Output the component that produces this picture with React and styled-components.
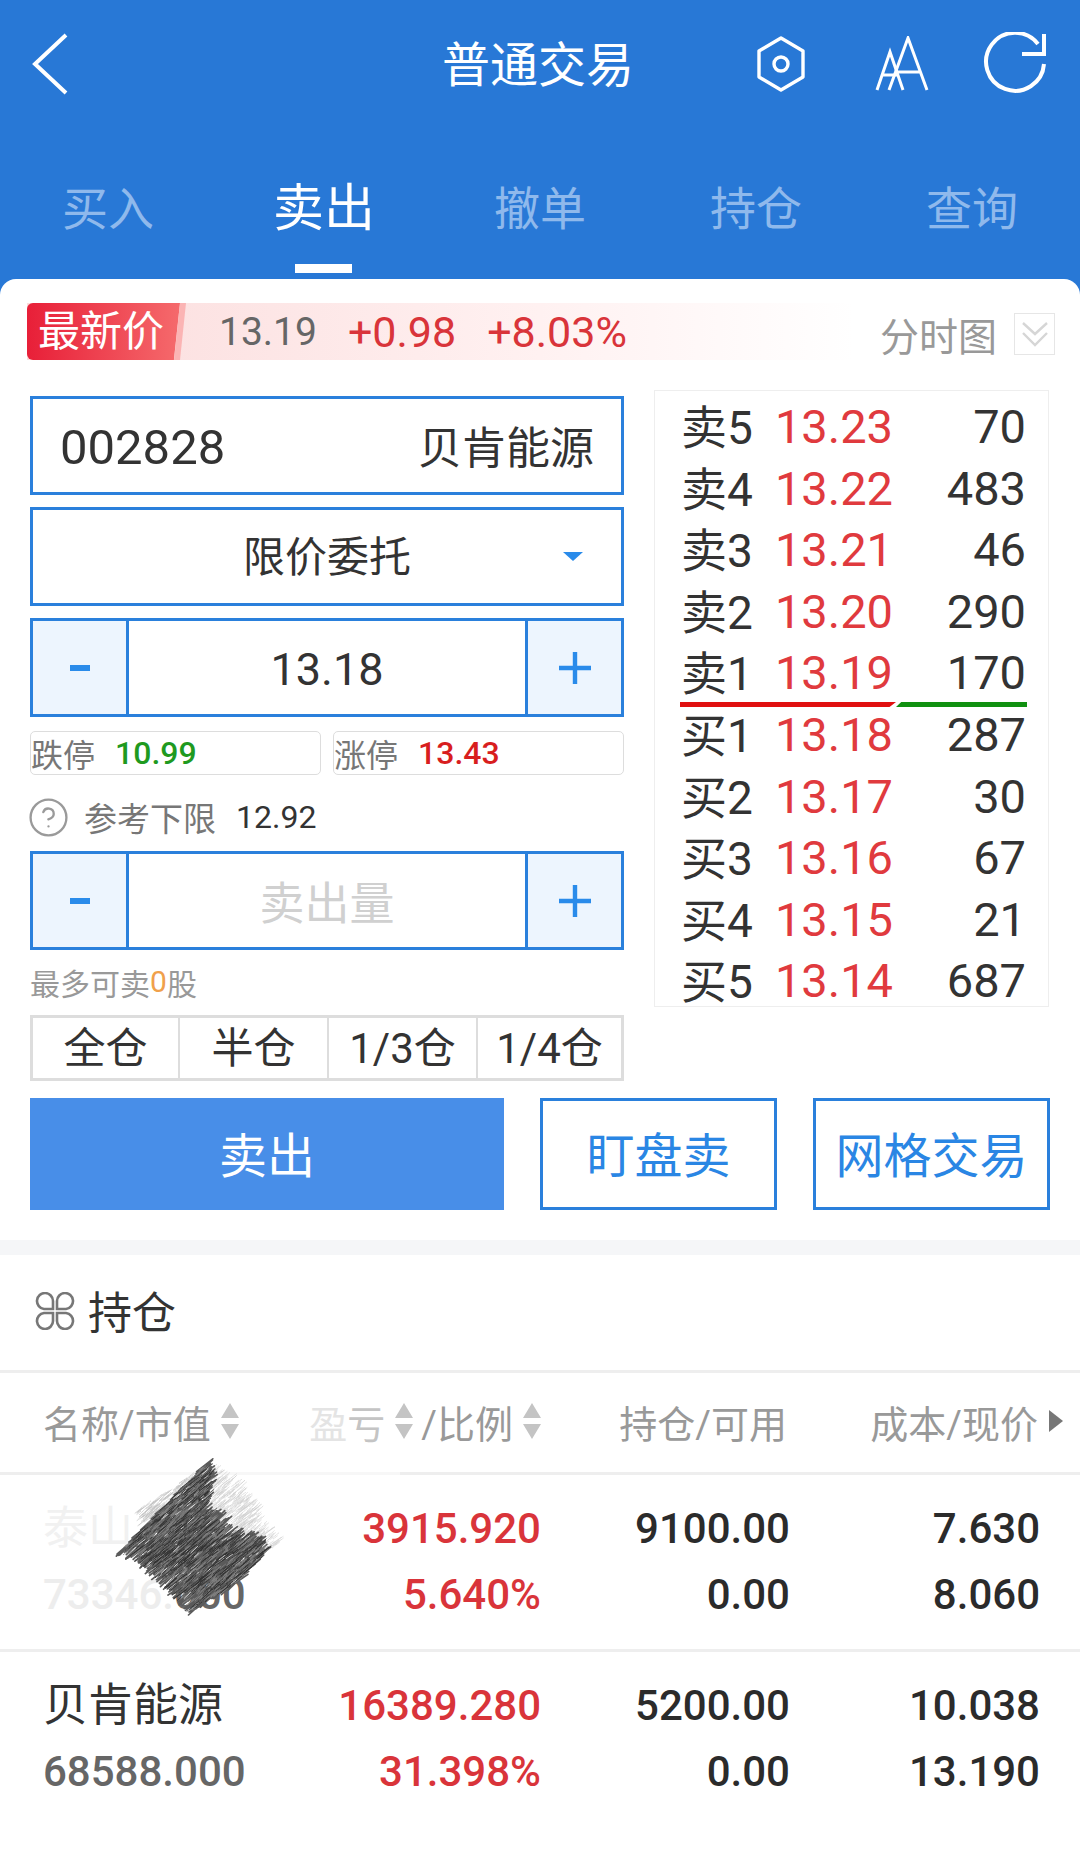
import React from 'react'
import styled, { createGlobalStyle } from 'styled-components'
import { CircleHelp } from 'lucide-react'

const BLUE = '#2878d6'
const LINE = '#2a80dc'
const RED = '#d9343a'

const GlobalStyle = createGlobalStyle`
  html, body { margin: 0; padding: 0; background: #fff; }
  * { box-sizing: border-box; }
  body { font-family: Roboto, "Noto Sans CJK SC", sans-serif; }
`

const tabs = ['买入', '卖出', '撤单', '持仓', '查询']

const asks = [
  ['卖5', '13.23', '70'],
  ['卖4', '13.22', '483'],
  ['卖3', '13.21', '46'],
  ['卖2', '13.20', '290'],
  ['卖1', '13.19', '170'],
]
const bids = [
  ['买1', '13.18', '287'],
  ['买2', '13.17', '30'],
  ['买3', '13.16', '67'],
  ['买4', '13.15', '21'],
  ['买5', '13.14', '687'],
]

const quick = ['全仓', '半仓', '1/3仓', '1/4仓']

const DARK_AREA = [[0, 280], [255, 5], [270, 70], [250, 140], [290, 185], [345, 235], [400, 235], [440, 280], [345, 385], [215, 470], [155, 405], [95, 345], [45, 300]]
const LIGHT_AREA = [[265, 10], [365, 75], [475, 260], [425, 285], [345, 225], [285, 170], [260, 140]]
const LIGHT_LEFT = [[45, 155], [205, 45], [240, 60], [60, 200]]

function inside(pt, poly) {
  let hit = false
  for (let i = 0, j = poly.length - 1; i < poly.length; j = i++) {
    const [xi, yi] = poly[i]
    const [xj, yj] = poly[j]
    if (yi > pt[1] !== yj > pt[1] && pt[0] < ((xj - xi) * (pt[1] - yi)) / (yj - yi) + xi) hit = !hit
  }
  return hit
}

// seeded so the scribble comes out the same on every load
function makeStrokes(poly, count, seed, minLen, maxLen) {
  let s = seed
  const rnd = () => {
    s = (s * 16807) % 2147483647
    return s / 2147483647
  }
  let d = ''
  let made = 0
  while (made < count) {
    const x = rnd() * 480
    const y = rnd() * 480
    const len = minLen + rnd() * maxLen
    const tilt = 0.7 + rnd() * 0.35
    if (!inside([x, y], poly)) continue
    d += `M${(x - len / 2).toFixed(1)} ${(y + (len * tilt) / 2).toFixed(1)}l${len.toFixed(1)} ${(-len * tilt).toFixed(1)}`
    made++
  }
  return d
}

function Scribble() {
  return (
    <ScribbleSvg viewBox="0 0 480 480" preserveAspectRatio="none">
      <g fill="none" strokeLinecap="round">
        <path d={makeStrokes(LIGHT_AREA, 420, 77, 8, 24)} stroke="#cfcfcf" strokeWidth="2" strokeDasharray="3 3" />
        <path d={makeStrokes(LIGHT_LEFT, 160, 91, 8, 22)} stroke="#c0c0c0" strokeWidth="2" strokeDasharray="3 3" />
        <path d={makeStrokes(DARK_AREA, 1400, 11, 14, 36)} stroke="#5a5a5a" strokeWidth="5" />
        <path d={makeStrokes(DARK_AREA, 1100, 29, 6, 18)} stroke="#858585" strokeWidth="2.6" strokeDasharray="3 3" />
        <path d={makeStrokes(DARK_AREA, 520, 53, 10, 30)} stroke="#2e2e2e" strokeWidth="2.6" strokeDasharray="5 3" />
        <path d={makeStrokes(DARK_AREA, 40, 137, 6, 16)} stroke="#fff" strokeWidth="2.2" />
      </g>
    </ScribbleSvg>
  )
}

function BackIcon() {
  return (
    <svg width="36" height="62" viewBox="0 0 36 62">
      <path d="M34 2 L3 31 L34 60" fill="none" stroke="#fff" strokeWidth="4" />
    </svg>
  )
}

function HexIcon() {
  return (
    <svg width="48" height="56" viewBox="0 0 48 56">
      <path d="M24 2 L46 15 V41 L24 54 L2 41 V15 Z" fill="none" stroke="#fff" strokeWidth="3.4" strokeLinejoin="round" />
      <circle cx="24" cy="28" r="7" fill="none" stroke="#fff" strokeWidth="3.4" />
    </svg>
  )
}

function FontSizeIcon() {
  return (
    <svg width="54" height="56" viewBox="0 0 54 56">
      <path d="M2 54 L15 16 L28 54 M7 39 H24" fill="none" stroke="#fff" strokeWidth="3" />
      <path d="M14 54 L33 2 L52 54 M21 36 H45" fill="none" stroke="#fff" strokeWidth="3" />
    </svg>
  )
}

function RefreshIcon() {
  return (
    <svg width="64" height="64" viewBox="0 0 64 64">
      <path d="M55 12 A29 29 0 1 0 61 32" fill="none" stroke="#fff" strokeWidth="4" />
      <path d="M61 2 V22 H39" fill="none" stroke="#fff" strokeWidth="4" />
    </svg>
  )
}

function CollapseIcon() {
  return (
    <CollapseBox>
      <svg width="30" height="28" viewBox="0 0 30 28">
        <path d="M3 3 L15 14 L27 3 M3 13 L15 25 L27 13" fill="none" stroke="#d6d6d6" strokeWidth="2.4" />
      </svg>
    </CollapseBox>
  )
}

function CaretDown() {
  return (
    <svg width="20" height="9" viewBox="0 0 20 9">
      <path d="M0 0 H20 L10 9 Z" fill="#2a8bea" />
    </svg>
  )
}

function MinusIcon() {
  return (
    <svg width="20" height="6" viewBox="0 0 20 6">
      <rect width="20" height="6" fill="#2a8bea" />
    </svg>
  )
}

function PlusIcon() {
  return (
    <svg width="32" height="32" viewBox="0 0 32 32">
      <path d="M0 16 H32 M16 0 V32" stroke="#2a8bea" strokeWidth="4.4" />
    </svg>
  )
}

function CloverIcon() {
  return (
    <svg width="40" height="38" viewBox="0 0 40 38">
      <path
        d="M18 17 H9 A8 8 0 1 1 18 9 Z M22 17 V9 A8 8 0 1 1 31 17 Z M18 21 V29 A8 8 0 1 1 9 21 Z M22 21 H31 A8 8 0 1 1 22 29 Z"
        fill="none"
        stroke="#777"
        strokeWidth="2.6"
      />
    </svg>
  )
}

function SortIcon() {
  return (
    <SortWrap>
      <svg width="18" height="36" viewBox="0 0 18 36">
        <path d="M9 0 L18 15 H0 Z" fill="#c4c4c4" />
        <path d="M0 21 H18 L9 36 Z" fill="#c4c4c4" />
      </svg>
    </SortWrap>
  )
}

function Stepper({ children, placeholder }) {
  return (
    <StepperBox>
      <StepButton><MinusIcon /></StepButton>
      <StepValue $placeholder={placeholder}>{children}</StepValue>
      <StepButton $right><PlusIcon /></StepButton>
    </StepperBox>
  )
}

function DepthLine({ row }) {
  return (
    <DepthRow>
      <DepthLabel>{row[0]}</DepthLabel>
      <DepthPrice>{row[1]}</DepthPrice>
      <DepthQty>{row[2]}</DepthQty>
    </DepthRow>
  )
}

export default function App() {
  return (
    <Page>
      <GlobalStyle />
      <TopBar>
        <BackSlot><BackIcon /></BackSlot>
        <Title>普通交易</Title>
        <TopIcons>
          <HexIcon />
          <FontSizeIcon />
          <RefreshIcon />
        </TopIcons>
      </TopBar>
      <TabBar>
        {tabs.map((t) => (
          <Tab key={t} $active={t === '卖出'}>{t}</Tab>
        ))}
      </TabBar>

      <Card>
        <PriceBar>
          <PriceStrip>
            <PriceTag>最新价</PriceTag>
            <TagEdge />
            <LastPrice>13.19</LastPrice>
            <Change>+0.98</Change>
            <Change>+8.03%</Change>
          </PriceStrip>
          <ChartLink>分时图</ChartLink>
          <CollapseIcon />
        </PriceBar>

        <TradeGrid>
          <LeftColumn>
            <FieldBox $between>
              <Code>002828</Code>
              <StockName>贝肯能源</StockName>
            </FieldBox>
            <FieldBox>
              <OrderType>限价委托</OrderType>
              <CaretSlot><CaretDown /></CaretSlot>
            </FieldBox>
            <Stepper>13.18</Stepper>
            <LimitRow>
              <LimitChip>跌停<LimitValue $color="#1f9a1f">10.99</LimitValue></LimitChip>
              <LimitChip>涨停<LimitValue $color="#d81e1e">13.43</LimitValue></LimitChip>
            </LimitRow>
            <HintRow>
              <CircleHelp size={43} strokeWidth={1.3} color="#9a9a9a" />
              <HintLabel>参考下限</HintLabel>
              <HintValue>12.92</HintValue>
            </HintRow>
            <Stepper placeholder>卖出量</Stepper>
            <MaxRow>最多可卖<MaxCount>0</MaxCount>股</MaxRow>
            <QuickRow>
              {quick.map((q) => (
                <QuickButton key={q}>{q}</QuickButton>
              ))}
            </QuickRow>
          </LeftColumn>

          <DepthPanel>
            {asks.map((r) => <DepthLine key={r[0]} row={r} />)}
            <DepthDivider>
              <RedBar />
              <GreenBar />
            </DepthDivider>
            {bids.map((r) => <DepthLine key={r[0]} row={r} />)}
          </DepthPanel>
        </TradeGrid>

        <Actions>
          <SellButton>卖出</SellButton>
          <OutlineButton>盯盘卖</OutlineButton>
          <OutlineButton>网格交易</OutlineButton>
        </Actions>

        <Band />

        <SectionTitle>
          <CloverIcon />
          <SectionName>持仓</SectionName>
        </SectionTitle>

        <TableHead>
          <HeadCell $left>名称/市值<SortIcon /></HeadCell>
          <HeadCell>
            <FadedChar $color="#e4e4e4">盈</FadedChar>
            <FadedChar $color="#c4c4c4">亏</FadedChar>
            <SortIcon />/比例<SortIcon />
          </HeadCell>
          <HeadCell>持仓/可用</HeadCell>
          <HeadCell $overhang>成本/现价<MoreArrow /></HeadCell>
        </TableHead>

        <HoldingRow>
          <Cell $left>
            <NameLine $faded>泰山</NameLine>
            <ValueLine $muted><FadedChar $color="#ededed">73346.</FadedChar>000</ValueLine>
          </Cell>
          <Cell>
            <ValueLine $red>3915.920</ValueLine>
            <ValueLine $red>5.640%</ValueLine>
          </Cell>
          <Cell>
            <ValueLine>9100.00</ValueLine>
            <ValueLine>0.00</ValueLine>
          </Cell>
          <Cell>
            <ValueLine>7.630</ValueLine>
            <ValueLine>8.060</ValueLine>
          </Cell>
          <Scribble />
        </HoldingRow>

        <HoldingRow $last>
          <Cell $left>
            <NameLine>贝肯能源</NameLine>
            <ValueLine $muted>68588.000</ValueLine>
          </Cell>
          <Cell>
            <ValueLine $red>16389.280</ValueLine>
            <ValueLine $red>31.398%</ValueLine>
          </Cell>
          <Cell>
            <ValueLine>5200.00</ValueLine>
            <ValueLine>0.00</ValueLine>
          </Cell>
          <Cell>
            <ValueLine>10.038</ValueLine>
            <ValueLine>13.190</ValueLine>
          </Cell>
        </HoldingRow>
      </Card>
    </Page>
  )
}

const Page = styled.div`
  width: 1080px;
  height: 1868px;
  overflow: hidden;
  background: ${BLUE};
  display: flex;
  flex-direction: column;
`

const TopBar = styled.div`
  height: 128px;
  display: grid;
  grid-template-columns: 1fr auto 1fr;
  align-items: center;
`

const BackSlot = styled.div`
  padding-left: 32px;
  display: flex;
  align-items: center;
`

const Title = styled.div`
  font-size: 48px;
  color: #fff;
  margin-left: -4px;
  padding-bottom: 6px;
`

const TopIcons = styled.div`
  display: flex;
  align-items: center;
  justify-content: flex-end;
  padding-right: 33px;

  svg:nth-child(2) {
    margin: 0 54px 0 70px;
  }
`

const TabBar = styled.div`
  height: 151px;
  display: grid;
  grid-template-columns: repeat(5, 1fr);
`

const Tab = styled.div`
  position: relative;
  padding-top: 49px;
  text-align: center;
  line-height: 64px;
  font-size: ${(p) => (p.$active ? '51px' : '46px')};
  color: ${(p) => (p.$active ? '#fff' : '#8fb9ec')};

  &::after {
    content: '';
    display: ${(p) => (p.$active ? 'block' : 'none')};
    position: absolute;
    left: 79px;
    bottom: 6px;
    width: 57px;
    height: 9px;
    background: #fff;
  }
`

const Card = styled.div`
  flex: 1;
  background: #fff;
  border-radius: 16px 16px 0 0;
  padding-top: 24px;
`

const PriceBar = styled.div`
  height: 57px;
  margin-left: 27px;
  display: flex;
  align-items: center;
`

const PriceStrip = styled.div`
  width: 827px;
  height: 57px;
  flex-shrink: 0;
  display: flex;
  align-items: center;
  background: linear-gradient(90deg, #fbdcdc 0%, #fff1f1 62%, #fff 100%);
`

const PriceTag = styled.div`
  width: 153px;
  height: 57px;
  padding-left: 11px;
  font-size: 42px;
  line-height: 57px;
  color: #fff;
  border-radius: 6px 0 0 6px;
  background: linear-gradient(90deg, #e81f38, #f56a6c);
  clip-path: polygon(0 0, 100% 0, 96% 100%, 0 100%);
`

const TagEdge = styled.div`
  width: 12px;
  height: 57px;
  margin-left: -6px;
  background: #fbb4b4;
  clip-path: polygon(50% 0, 100% 0, 50% 100%, 0 100%);
`

const LastPrice = styled.span`
  margin-left: 33px;
  font-size: 39px;
  color: #666;
`

const Change = styled.span`
  margin-left: 31px;
  font-size: 43px;
  color: ${RED};
`

const ChartLink = styled.div`
  margin-left: 26px;
  padding-top: 4px;
  font-size: 39px;
  color: #999;
  white-space: nowrap;
`

const CollapseBox = styled.div`
  width: 41px;
  height: 42px;
  margin-left: 17px;
  margin-top: 4px;
  border: 1px solid #e6e6e6;
  display: flex;
  align-items: center;
  justify-content: center;
  flex-shrink: 0;
`

const TradeGrid = styled.div`
  margin-top: 30px;
  padding: 0 31px 0 30px;
  display: grid;
  grid-template-columns: 594px 395px;
  column-gap: 30px;
  align-items: start;
`

const LeftColumn = styled.div`
  padding-top: 6px;
  display: flex;
  flex-direction: column;
`

const FieldBox = styled.div`
  position: relative;
  height: 99px;
  margin-bottom: 12px;
  padding: 0 27px;
  border: 3px solid ${LINE};
  display: flex;
  align-items: center;
  justify-content: ${(p) => (p.$between ? 'space-between' : 'center')};
`

const Code = styled.span`
  font-size: 49px;
  color: #333;
  padding-top: 3px;
`

const StockName = styled.span`
  font-size: 44px;
  color: #333;
  padding-bottom: 2px;
`

const OrderType = styled.span`
  font-size: 42px;
  color: #333;
  padding-bottom: 6px;
`

const CaretSlot = styled.span`
  position: absolute;
  right: 38px;
  top: 42px;
  line-height: 0;
`

const StepperBox = styled.div`
  height: 99px;
  border: 3px solid ${LINE};
  display: grid;
  grid-template-columns: 96px 1fr 96px;
`

const StepButton = styled.div`
  background: #edf5fe;
  display: flex;
  align-items: center;
  justify-content: center;
  ${(p) => (p.$right ? `border-left: 3px solid ${LINE};` : `border-right: 3px solid ${LINE};`)}
`

const StepValue = styled.div`
  display: flex;
  align-items: center;
  justify-content: center;
  font-size: 45px;
  padding-top: ${(p) => (p.$placeholder ? '0' : '4px')};
  color: ${(p) => (p.$placeholder ? '#d0d0d0' : '#333')};
`

const LimitRow = styled.div`
  margin-top: 14px;
  display: grid;
  grid-template-columns: 291px 291px;
  column-gap: 12px;
`

const LimitChip = styled.div`
  height: 44px;
  border: 1px solid #ddd;
  border-radius: 5px;
  display: flex;
  align-items: center;
  font-size: 32px;
  color: #777;
`

const LimitValue = styled.span`
  margin-left: 20px;
  font-size: 32px;
  font-weight: 500;
  color: ${(p) => p.$color};
`

const HintRow = styled.div`
  height: 76px;
  margin-left: -3px;
  padding-top: 8px;
  display: flex;
  align-items: center;
`

const HintLabel = styled.span`
  margin-left: 14px;
  font-size: 33px;
  color: #777;
`

const HintValue = styled.span`
  margin-left: 20px;
  font-size: 32px;
  color: #333;
`

const MaxRow = styled.div`
  height: 65px;
  padding-bottom: 2px;
  display: flex;
  align-items: center;
  font-size: 30px;
  color: #999;
`

const MaxCount = styled.span`
  color: #f0a04b;
`

const QuickRow = styled.div`
  height: 66px;
  border: 3px solid #ddd;
  display: grid;
  grid-template-columns: 145px 149px 149px 145px;
  grid-auto-rows: 60px;
`

const QuickButton = styled.div`
  display: flex;
  align-items: center;
  justify-content: center;
  font-size: 42px;
  line-height: 1;
  padding-top: 2px;
  color: #333;

  & + & {
    border-left: 2px solid #ddd;
  }
`

const DepthPanel = styled.div`
  height: 617px;
  padding: 0 0 0 26px;
  border: 1px solid #eee;
`

const DepthRow = styled.div`
  height: 61.6px;
  display: grid;
  grid-template-columns: 70px 142px 133px;
  align-items: center;
  white-space: nowrap;
`

const DepthLabel = styled.span`
  font-size: 46px;
  color: #333;
  padding-bottom: 11px;
`

const DepthPrice = styled.span`
  font-size: 47px;
  color: #e03a3e;
  text-align: right;
  padding-bottom: 6px;
`

const DepthQty = styled.span`
  font-size: 47px;
  color: #333;
  text-align: right;
  padding-bottom: 6px;
`

const DepthDivider = styled.div`
  height: 5px;
  margin: 0 0 -5px -1px;
  display: flex;
  width: 347px;
  position: relative;
  top: 3px;
`

const RedBar = styled.div`
  width: 216px;
  height: 5px;
  background: #e01010;
  clip-path: polygon(0 0, 100% 0, 97% 100%, 0 100%);
`

const GreenBar = styled.div`
  width: 131px;
  height: 5px;
  background: #109010;
  clip-path: polygon(4% 0, 100% 0, 100% 100%, 0 100%);
`

const Actions = styled.div`
  margin-top: 17px;
  padding: 0 30px;
  display: flex;
  gap: 36px;
`

const SellButton = styled.div`
  width: 474px;
  height: 112px;
  background: #488ee8;
  color: #fff;
  font-size: 48px;
  padding-bottom: 4px;
  display: flex;
  align-items: center;
  justify-content: center;
`

const OutlineButton = styled.div`
  width: 237px;
  height: 112px;
  border: 3px solid ${LINE};
  color: #2a86e4;
  font-size: 48px;
  padding-bottom: 4px;
  white-space: nowrap;
  display: flex;
  align-items: center;
  justify-content: center;
`

const Band = styled.div`
  height: 15px;
  margin-top: 30px;
  background: #f5f6f8;
`

const SectionTitle = styled.div`
  height: 118px;
  padding: 0 0 3px 35px;
  border-bottom: 3px solid #eee;
  display: flex;
  align-items: center;
  gap: 13px;
`

const SectionName = styled.span`
  font-size: 44px;
  color: #333;
  padding-bottom: 3px;
`

const TableHead = styled.div`
  height: 102px;
  padding: 0 0 6px 43px;
  display: grid;
  grid-template-columns: 248px 250px 246px 250px;
  align-items: center;
  background: linear-gradient(#eee, #eee) left bottom / 150px 3px no-repeat,
    linear-gradient(#f7f7f7, #f7f7f7) 150px bottom / 250px 3px no-repeat,
    linear-gradient(#eee, #eee) 400px bottom / 680px 3px no-repeat;
`

const HeadCell = styled.div`
  display: flex;
  align-items: center;
  justify-content: ${(p) => (p.$left ? 'flex-start' : 'flex-end')};
  font-size: 38px;
  color: #999;
  white-space: nowrap;
  ${(p) => p.$overhang && 'margin-right: -26px;'}
`

const FadedChar = styled.span`
  color: ${(p) => p.$color};
`

const SortWrap = styled.span`
  margin: 0 8px 0 10px;
  line-height: 0;

  &:last-child {
    margin-right: 0;
  }
`

const MoreArrow = styled.span`
  margin-left: 11px;
  width: 0;
  height: 0;
  border-left: 14px solid #777;
  border-top: 11px solid transparent;
  border-bottom: 11px solid transparent;
`

const HoldingRow = styled.div`
  position: relative;
  height: 177px;
  padding: 21px 0 0 43px;
  display: grid;
  grid-template-columns: 248px 250px 249px 250px;
  align-content: start;
  ${(p) => !p.$last && 'border-bottom: 3px solid #eee;'}
`

const Cell = styled.div`
  display: flex;
  flex-direction: column;
  align-items: ${(p) => (p.$left ? 'flex-start' : 'flex-end')};
`

const NameLine = styled.div`
  height: 66px;
  line-height: 66px;
  font-size: 45px;
  color: ${(p) => (p.$faded ? '#f1f1f1' : '#333')};
`

const ValueLine = styled.div`
  height: 66px;
  line-height: 66px;
  font-size: 42px;
  font-weight: 500;
  color: ${(p) => (p.$red ? RED : p.$muted ? '#666' : '#2b2b2b')};
`

const ScribbleSvg = styled.svg`
  position: absolute;
  left: 122px;
  top: -14px;
  width: 160px;
  height: 152px;
  overflow: visible;
  pointer-events: none;
`
